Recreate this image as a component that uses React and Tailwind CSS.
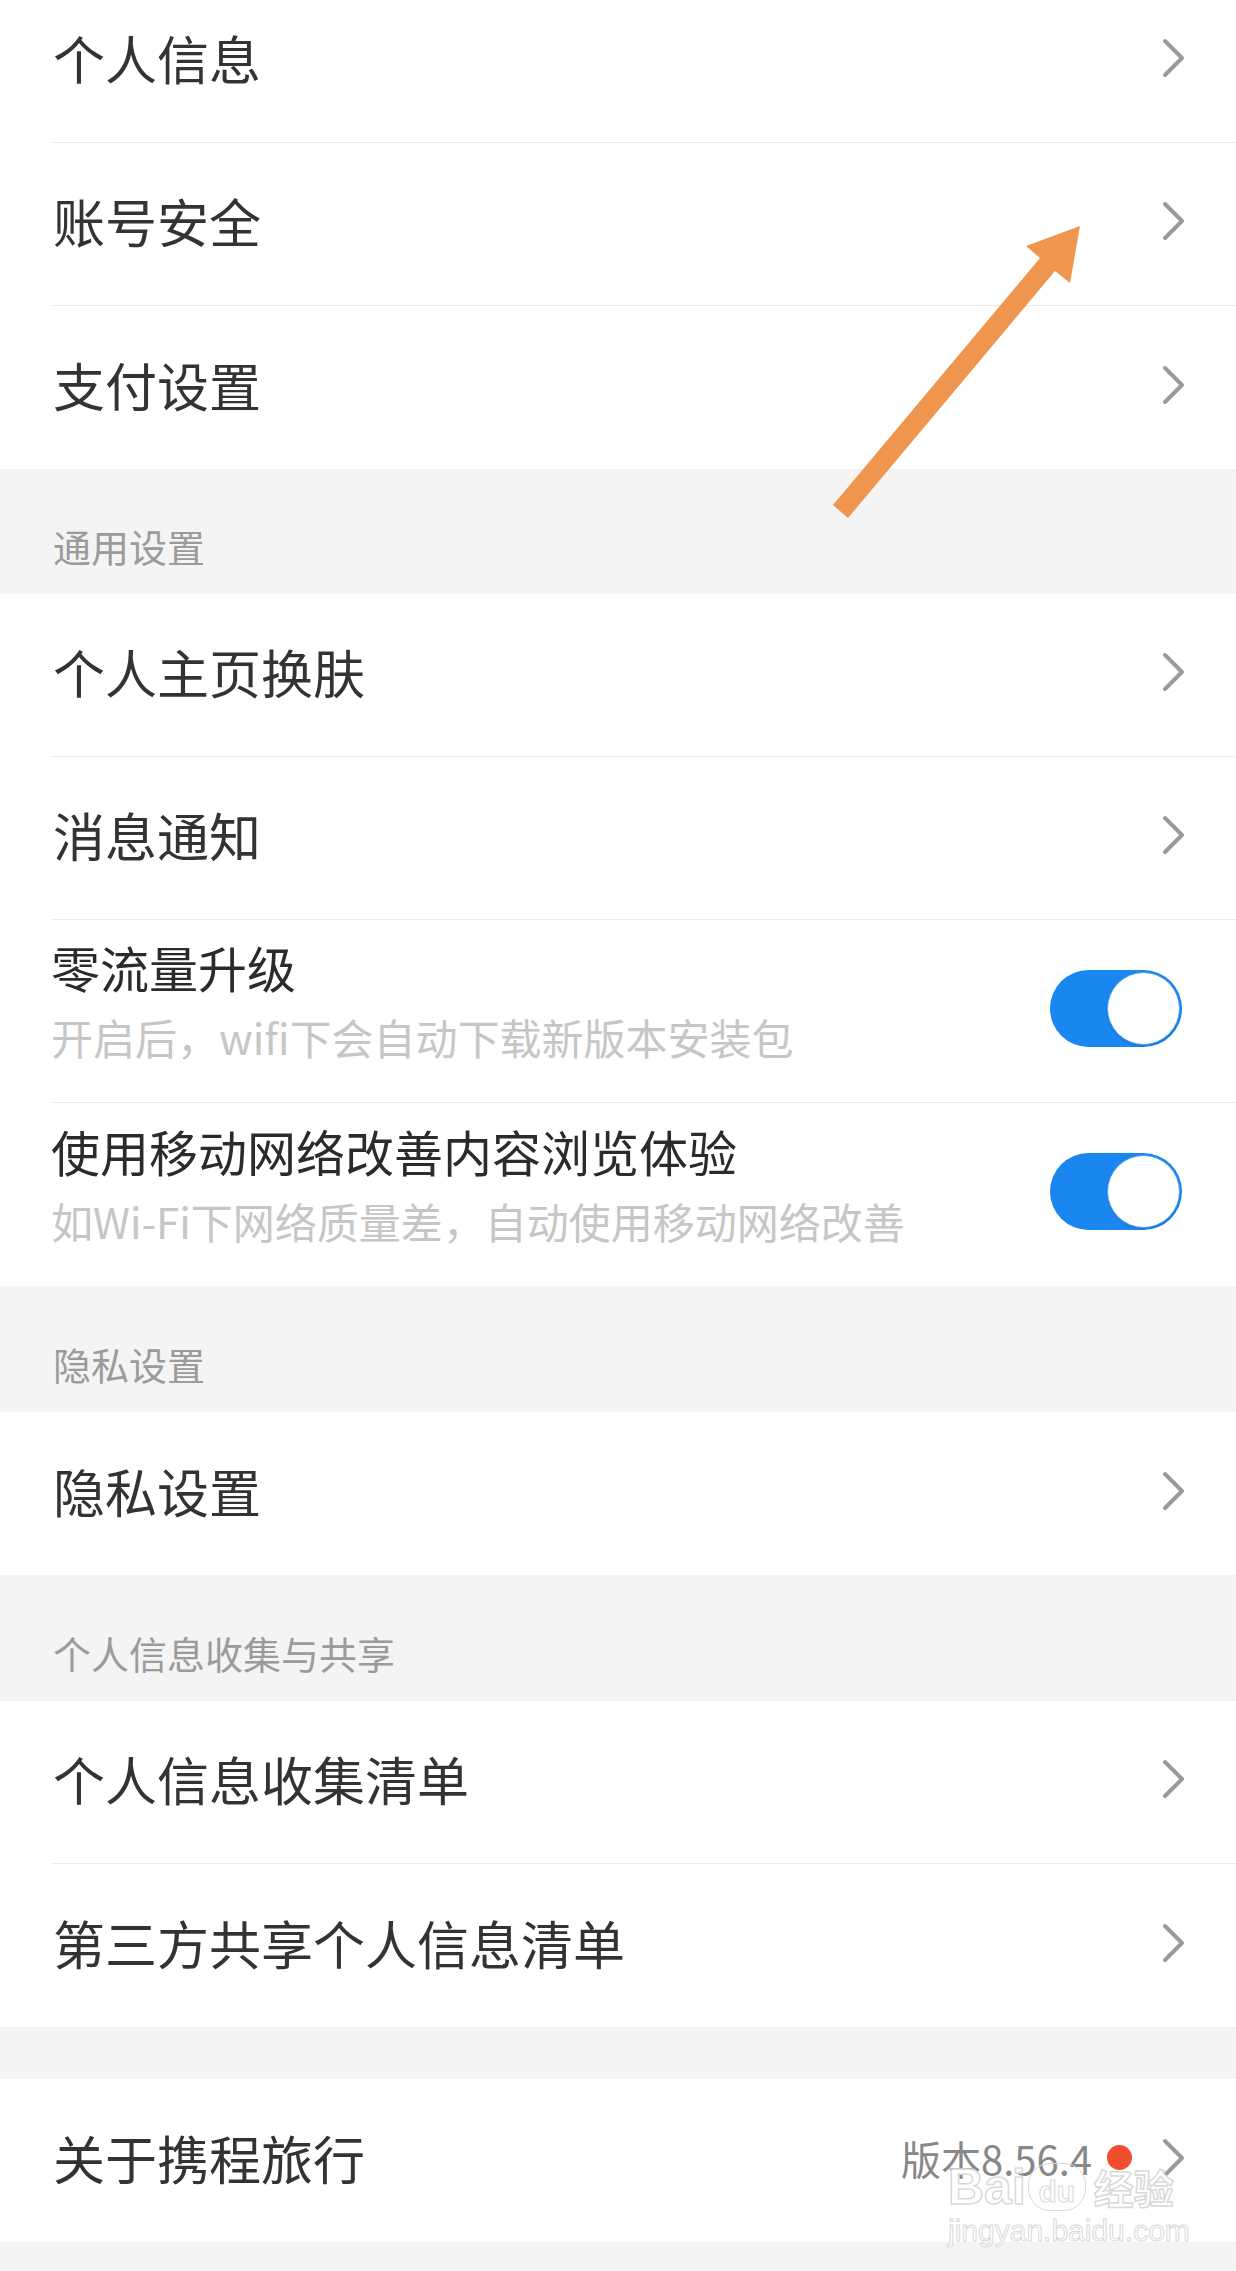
import React from 'react';

const Chevron = () => (
  <svg width="24" height="40" viewBox="0 0 24 40" className="shrink-0">
    <path d="M3 3 L20 20 L3 37" fill="none" stroke="#9a9a9a" strokeWidth="4" strokeLinecap="round" strokeLinejoin="round" />
  </svg>
);

const Toggle = () => (
  <div className="mt-[16px] flex h-[77px] w-[132px] shrink-0 items-center justify-end rounded-full bg-[#1a86f0] p-[2px]">
    <div className="h-[73px] w-[73px] rounded-full border border-[#4d9ff2] bg-white shadow-[0_1px_2px_rgba(0,0,0,0.15)]" />
  </div>
);

const Row = ({ label, last, right }) => (
  <div className="pl-[51px]">
    <div className={`flex h-[163px] items-center justify-between pb-[6px] pl-[2px] pr-[50px] ${last ? '' : 'border-b border-[#ececec]'}`}>
      <span className="text-[52px] leading-none text-[#333333]">{label}</span>
      <div className="flex items-center">
        {right}
        <Chevron />
      </div>
    </div>
  </div>
);

const ToggleRow = ({ title, desc, last }) => (
  <div className="pl-[51px]">
    <div className={`flex h-[183px] items-center justify-between pb-[22px] pr-[54px] ${last ? '' : 'border-b border-[#ececec]'}`}>
      <div className="flex flex-col gap-[18px]">
        <span className="text-[49px] leading-[56px] text-[#2b2b2b]">{title}</span>
        <span className="text-[42px] leading-[48px] text-[#c6c6c6]">{desc}</span>
      </div>
      <Toggle />
    </div>
  </div>
);

const Header = ({ children, h = 'h-[126px]' }) => (
  <div className={`flex ${h} items-end pb-[25px] pl-[53px] text-[38px] leading-[46px] text-[#9b9b9b]`}>
    {children}
  </div>
);

export default function App() {
  return (
    <div className="relative flex min-h-screen flex-col overflow-hidden bg-[#f4f4f4] font-['Noto_Sans_CJK_SC','Noto_Sans',sans-serif]">
      <div className="-mt-[20px] bg-white">
        <Row label="个人信息" />
        <Row label="账号安全" />
        <Row label="支付设置" last />
      </div>

      <Header h="h-[125px]">通用设置</Header>
      <div className="bg-white">
        <Row label="个人主页换肤" />
        <Row label="消息通知" />
        <ToggleRow title="零流量升级" desc="开启后，wifi下会自动下载新版本安装包" />
        <ToggleRow title="使用移动网络改善内容浏览体验" desc="如Wi-Fi下网络质量差，自动使用移动网络改善" last />
      </div>

      <Header>隐私设置</Header>
      <div className="bg-white">
        <Row label="隐私设置" last />
      </div>

      <Header>个人信息收集与共享</Header>
      <div className="bg-white">
        <Row label="个人信息收集清单" />
        <Row label="第三方共享个人信息清单" last />
      </div>

      <div className="h-[52px]" />
      <div className="bg-white">
        <Row
          label="关于携程旅行"
          last
          right={
            <>
              <span className="text-[40px] leading-none text-[#888888]">版本8.56.4</span>
              <span className="ml-[15px] mr-[30px] h-[25px] w-[25px] rounded-full bg-[#f04e2f]" />
            </>
          }
        />
      </div>

      {/* watermark */}
      <div className="pointer-events-none absolute left-[948px] top-[2162px] flex flex-col items-start text-white [-webkit-text-stroke:1.5px_#d9d9d9]">
        <div className="flex items-center font-['Liberation_Sans',sans-serif] text-[50px] font-bold leading-[50px]">
          <span>Bai</span>
          <span className="mx-[2px] flex h-[48px] w-[58px] items-end justify-center rounded-[22px] border-[1.5px] border-[#d9d9d9] text-[30px] leading-[36px] [-webkit-text-stroke:1px_#d9d9d9]">du</span>
          <span className="ml-[6px] font-['Noto_Sans_CJK_SC',sans-serif] text-[40px]">经验</span>
        </div>
        <span className="mt-[2px] font-['Liberation_Sans',sans-serif] text-[30px] leading-[34px] [-webkit-text-stroke:1px_#d9d9d9]">jingyan.baidu.com</span>
      </div>

      {/* annotation arrow */}
      <svg className="pointer-events-none absolute left-0 top-0" width="1236" height="600" viewBox="0 0 1236 600">
        <polygon
          points="833,505 1040,258 1026,246 1080,226 1070,283 1055,271 848,518"
          fill="#f0954d"
        />
      </svg>
    </div>
  );
}
